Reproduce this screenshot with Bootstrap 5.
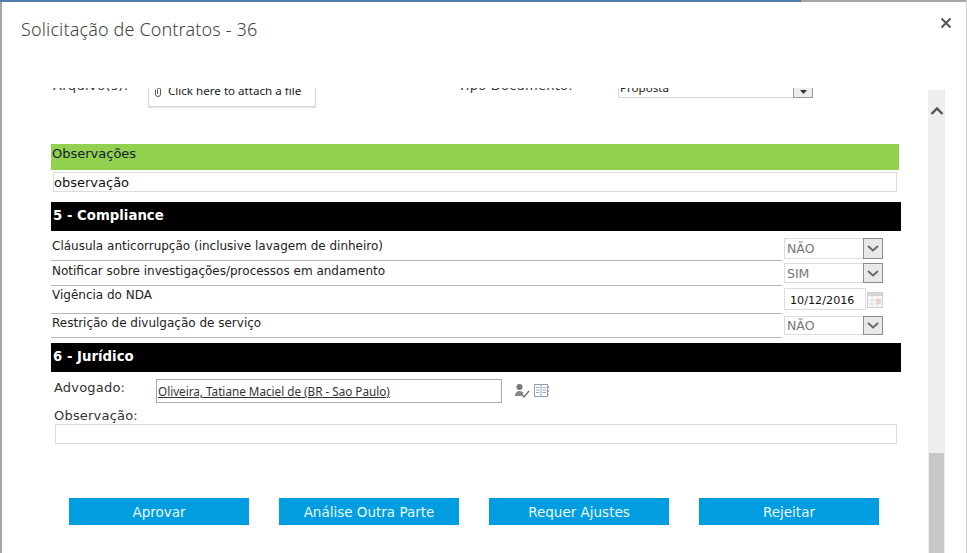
<!doctype html>
<html lang="pt-BR">
<head>
<meta charset="utf-8">
<title>Solicitação de Contratos - 36</title>
<link rel="stylesheet" href="https://cdn.jsdelivr.net/npm/bootstrap@5.3.0/dist/css/bootstrap.min.css">
<style>
html,body{height:553px;overflow:hidden;background:#fff}
body{font-family:"DejaVu Sans",sans-serif;font-size:12px;line-height:16px;color:#222}
.frame-box{height:553px;width:967px;position:relative;overflow:hidden;border-right:1px solid #d0d0d0}
.edge-top{height:2px;background:linear-gradient(to right,#4f7fa6 0,#4f7fa6 801px,#a6a6a6 801px,#a6a6a6 100%);flex:none}
.frame-main{border-left:2px solid #a4a4a4;height:551px}
.head-zone{height:86px;flex:none;padding-left:19px;padding-right:13px}
.ttl{font-family:"Noto Sans",sans-serif;font-weight:300;font-size:18px;line-height:24px;color:#444;margin:15px 0 0;letter-spacing:.14px}
.x-btn{border:0;background:none;padding:0;margin-top:14px;width:14px;height:14px;line-height:0}
.body-zone{min-height:0;padding-right:21px}
.scroll-clip{width:926px;overflow:hidden;height:465px;padding-left:49px}
.scroll-inner{width:850px;margin-top:-14px}
.att-row{height:70px;position:relative}
.lbl-clip{width:97px;padding:0 0 0 2px;margin-top:4px;height:16px;color:#333;font-size:13px;letter-spacing:.4px}
.att-box{width:168px;height:33px;border:1px solid #d6d6d6;box-shadow:0 1px 1px #e5e5e5;border-top:0;padding:9px 0 0 5px;font-family:"Noto Sans",sans-serif;font-size:11.6px;color:#222;gap:6px}
.lbl-type{width:142px;margin-left:142px;margin-top:4px;font-size:13px;letter-spacing:.25px;color:#333}
.sel-top{width:195px;height:24px;margin-left:18px;border:1px solid #d6d6d6;border-top:0;padding:0 0 0 1px;justify-content:space-between;font-family:"Noto Sans",sans-serif;font-size:11.6px;line-height:19px}
.sel-top .tri-btn{width:20px;height:24px;border:1px solid #9a9a9a;border-top:0;background:#ededed;margin:0 -1px -1px 0;display:flex;align-items:flex-end;justify-content:center;padding-bottom:3px}
.green-bar{background:#92d050;width:848px;height:26px;padding:2px 1px;color:#123;font-size:13px}
.inp-line{display:block;width:844px;height:20px;margin:2px 0 10px 2px;border:1px solid #ddd;padding:0;font-family:"DejaVu Sans",sans-serif;font-size:13px;color:#111;border-radius:0;outline:0;background:#fff}
.black-bar{background:#000;color:#fff;font-weight:700;height:29px;font-size:13.3px;line-height:27px;padding-left:2px}
.line-row>.q-text{width:731px;border-bottom:1px solid #b8b8b8;padding-left:1px}
.line-row>.q-ctl{margin-left:2px;width:99px}
.r1{height:30px}.r1 .q-text{padding-top:7px}.r1 .q-ctl{margin-top:7px}
.r2{height:25px}.r2 .q-text{padding-top:2px}.r2 .q-ctl{margin-top:2px}
.r3{height:28px}.r3 .q-text{padding-top:1px}.r3 .q-ctl{margin-top:2px}
.r4{height:24px}.r4 .q-text{padding-top:1px}.r4 .q-ctl{margin-top:2px}
.sel-box{height:20px;border:1px solid #ddd;padding:2px 0 0 2px;font-size:12.5px;line-height:15px;color:#777;justify-content:space-between;position:relative}
.r1 .sel-box{height:21px}
.r4 .sel-box{height:19px;padding-top:1px}
.sel-arrow{width:20px;height:20px;margin:-3px -1px 0 0;border:1px solid #8c8c8c;background:#e8e8e8;line-height:0;display:flex;align-items:center;justify-content:center}
.r1 .sel-arrow{height:21px}
.r4 .sel-arrow{height:19px;margin-top:-2px}
.date-box{width:82px;height:22px;border:1px solid #ddd;color:#111;font-size:11.2px;line-height:23px;padding-left:5px;margin-right:1px}
.cal-ico{margin-top:1px}
.sec6-gap{margin-top:5px}
.adv-row{height:52px;padding-left:3px;padding-top:7px}
.adv-lbl{width:102px;font-size:13px;letter-spacing:.2px;color:#333;margin-top:1px}
.adv-inp{width:346px;height:24px;border:1px solid #a8a8a8;padding:3px 0 0 1px;font-family:"Noto Sans",sans-serif;font-size:11.7px;color:#333}
.adv-inp span{text-decoration:underline}
.adv-ico{margin-left:12px;margin-top:4px;gap:3px;line-height:0}
.obs-lbl{padding-left:3px;font-size:13px;letter-spacing:.2px;color:#333;height:16px;margin-top:-16px}
.obs-inp{display:block;width:842px;height:20px;margin:0 0 54px 4px;border:1px solid #ddd;background:#fff;outline:0}
.btn-row{gap:30px;padding-left:18px}
.btn-blue{width:180px;height:27px;border:0;border-radius:0;background:#009ee0;color:#eaf7fd;font-family:"DejaVu Sans",sans-serif;font-size:13.5px;padding:1px 0 0;line-height:27px}
.bar-track{width:17px;margin-top:2px;background:#eee;flex:none;height:463px;padding-top:16px}
.bar-thumb{width:15px;height:100px;background:#c8c8c8;margin:0 auto}
</style>
</head>
<body>
<div class="frame-box d-flex flex-column">
  <div class="edge-top"></div>
  <div class="frame-main d-flex flex-column">
    <div class="head-zone d-flex justify-content-between">
      <h1 class="ttl">Solicitação de Contratos - 36</h1>
      <button class="x-btn" type="button" aria-label="Fechar">
        <svg width="14" height="14" viewBox="0 0 14 14"><path d="M2.500 2.500 11.500 11.500M11.500 2.500 2.500 11.500" stroke="#555" stroke-width="2" fill="none"/></svg>
      </button>
    </div>
    <div class="body-zone d-flex justify-content-between">
      <div class="scroll-clip">
        <div class="scroll-inner">
          <div class="att-row d-flex align-items-start">
            <div class="lbl-clip">Arquivo(s):</div>
            <div class="att-box d-flex align-items-start">
              <svg width="8" height="10" viewBox="0 0 8 10" class="mt-1"><path d="M1.500 2.500V7a2.500 2.500 0 0 0 5 0V2.500a1.500 1.500 0 0 0-3 0V7" stroke="#555" fill="none"/></svg>
              <span>Click here to attach a file</span>
            </div>
            <div class="lbl-type">Tipo Documento:</div>
            <div class="sel-top d-flex align-items-end"><span>Proposta</span><span class="tri-btn"><svg width="7" height="4" viewBox="0 0 7 4"><path d="M0 0h7L3.500 4z" fill="#333"/></svg></span></div>
          </div>
          <div class="green-bar">Observações</div>
          <input class="inp-line" type="text" value="observação" aria-label="Observações">
          <div class="black-bar">5 - Compliance</div>
          <div class="line-row r1 d-flex">
            <div class="q-text">Cláusula anticorrupção (inclusive lavagem de dinheiro)</div>
            <div class="q-ctl"><div class="sel-box d-flex"><span>NÃO</span><span class="sel-arrow"><svg width="12" height="7" viewBox="0 0 12 7"><path d="M1 1 6 5.500 11 1" stroke="#666" stroke-width="1.800" fill="none"/></svg></span></div></div>
          </div>
          <div class="line-row r2 d-flex">
            <div class="q-text">Notificar sobre investigações/processos em andamento</div>
            <div class="q-ctl"><div class="sel-box d-flex"><span>SIM</span><span class="sel-arrow"><svg width="12" height="7" viewBox="0 0 12 7"><path d="M1 1 6 5.500 11 1" stroke="#666" stroke-width="1.800" fill="none"/></svg></span></div></div>
          </div>
          <div class="line-row r3 d-flex">
            <div class="q-text">Vigência do NDA</div>
            <div class="q-ctl d-flex align-items-center align-self-start">
              <div class="date-box">10/12/2016</div>
              <svg class="cal-ico" width="16" height="16" viewBox="0 0 16 16"><rect x=".5" y=".5" width="15" height="15" fill="#f9f9f9" stroke="#d0d0d0"/><rect x="1" y="1" width="14" height="3" fill="#d4d4d4"/><path d="M1 8h14M1 12h14M5 4v11M10 4v11" stroke="#e2e2e2"/><rect x="10" y="8" width="3" height="3" fill="none" stroke="#e6b8a4"/></svg>
            </div>
          </div>
          <div class="line-row r4 d-flex">
            <div class="q-text">Restrição de divulgação de serviço</div>
            <div class="q-ctl"><div class="sel-box d-flex"><span>NÃO</span><span class="sel-arrow"><svg width="12" height="7" viewBox="0 0 12 7"><path d="M1 1 6 5.500 11 1" stroke="#666" stroke-width="1.800" fill="none"/></svg></span></div></div>
          </div>
          <div class="black-bar sec6-gap">6 - Jurídico</div>
          <div class="adv-row d-flex align-items-start">
            <div class="adv-lbl">Advogado:</div>
            <div class="adv-inp"><span>Oliveira, Tatiane Maciel de (BR - Sao Paulo)</span></div>
            <div class="adv-ico d-flex">
              <svg width="16" height="16" viewBox="0 0 16 16"><circle cx="5.500" cy="4" r="3" fill="#777"/><path d="M1 13c0-3.500 2-5 4.500-5S9 9 9.500 10L7 13z" fill="#888"/><path d="M7.500 11l2.500 3L15 8" stroke="#666" stroke-width="1.200" fill="none"/></svg>
              <svg width="17" height="15" viewBox="0 0 17 15"><rect x="1.500" y="1.500" width="13" height="12" fill="#fff" stroke="#8a9fb3"/><path d="M8 2v11M3 4.500h3.500M3 7h3.500M3 9.500h3.500M9.500 4.500H13M9.500 7H13M9.500 9.500H13" stroke="#9aacbd"/><path d="M15.500 3v2M15.500 7v2M15.500 11v1" stroke="#c99"/></svg>
            </div>
          </div>
          <div class="obs-lbl">Observação:</div>
          <input class="obs-inp" type="text" aria-label="Observação">
          <div class="btn-row d-flex">
            <button class="btn btn-blue" type="button">Aprovar</button>
            <button class="btn btn-blue" type="button">Análise Outra Parte</button>
            <button class="btn btn-blue" type="button">Requer Ajustes</button>
            <button class="btn btn-blue" type="button">Rejeitar</button>
          </div>
        </div>
      </div>
      <div class="bar-track d-flex flex-column justify-content-between">
        <svg class="mx-auto" width="14" height="10" viewBox="0 0 14 10"><path d="M1.500 8 7 2.500 12.500 8" stroke="#555" stroke-width="2.400" fill="none"/></svg>
        <div class="bar-thumb"></div>
      </div>
    </div>
  </div>
</div>
<script src="https://cdn.jsdelivr.net/npm/bootstrap@5.3.0/dist/js/bootstrap.bundle.min.js"></script>
</body>
</html>
